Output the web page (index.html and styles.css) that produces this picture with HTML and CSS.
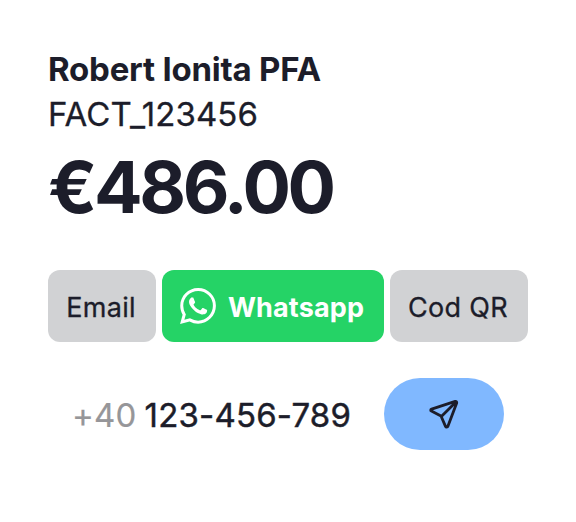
FILE: index.html
```html
<!DOCTYPE html>
<html lang="ro">
<head>
<meta charset="utf-8">
<title>Factura</title>
<link rel="stylesheet" href="styles.css">
</head>
<body>
<main class="invoice">
  <h1 class="name">Robert Ionita PFA</h1>
  <p class="number">FACT_123456</p>
  <p class="amount">€486.00</p>
  <div class="channels">
    <button class="channel email">Email</button>
    <button class="channel whatsapp">
      <svg class="wa-icon" viewBox="0 0 24 24" fill="currentColor"><path d="M17.472 14.382c-.297-.149-1.758-.867-2.03-.967-.273-.099-.471-.148-.67.15-.197.297-.767.966-.94 1.164-.173.199-.347.223-.644.075-.297-.15-1.255-.463-2.39-1.475-.883-.788-1.48-1.761-1.653-2.059-.173-.297-.018-.458.13-.606.134-.133.298-.347.446-.52.149-.174.198-.298.298-.497.099-.198.05-.371-.025-.52-.075-.149-.669-1.612-.916-2.207-.242-.579-.487-.5-.669-.51-.173-.008-.371-.01-.57-.01-.198 0-.52.074-.792.372-.272.297-1.04 1.016-1.04 2.479 0 1.462 1.065 2.875 1.213 3.074.149.198 2.096 3.2 5.077 4.487.709.306 1.262.489 1.694.625.712.227 1.36.195 1.871.118.571-.085 1.758-.719 2.006-1.413.248-.694.248-1.289.173-1.413-.074-.124-.272-.198-.57-.347m-5.421 7.403h-.004a9.87 9.87 0 01-5.031-1.378l-.361-.214-3.741.982.998-3.648-.235-.374a9.86 9.86 0 01-1.51-5.26c.001-5.45 4.436-9.884 9.888-9.884 2.64 0 5.122 1.03 6.988 2.898a9.825 9.825 0 012.893 6.994c-.003 5.45-4.437 9.884-9.885 9.884m8.413-18.297A11.815 11.815 0 0012.05 0C5.495 0 .16 5.335.157 11.892c0 2.096.547 4.142 1.588 5.945L.057 24l6.305-1.654a11.882 11.882 0 005.683 1.448h.005c6.554 0 11.89-5.335 11.893-11.893a11.821 11.821 0 00-3.48-8.413z"/></svg>
      <span>Whatsapp</span>
    </button>
    <button class="channel qr">Cod QR</button>
  </div>
  <div class="recipient">
    <p class="phone"><span class="prefix">+40</span> 123-456-789</p>
    <button class="send" aria-label="Trimite">
      <svg class="send-icon" viewBox="0 0 32 32" fill="none" stroke="currentColor" stroke-width="2.8" stroke-linecap="round" stroke-linejoin="round"><path d="M28.2 3.8 13.6 18.2M27.2 3.4 3.6 11.1C2.5 11.5 2.4 12.6 3.4 13.1L13 18l4.5 10.4c.5 1.1 2 1 2.4-.1L28.7 4.9c.3-1-.5-1.8-1.5-1.5z"/></svg>
    </button>
  </div>
</main>
</body>
</html>
```
FILE: styles.css
```css
* { box-sizing: border-box; margin: 0; }
body { background: #fff; color: #1c1d2a; font-family: Inter, "Liberation Sans", sans-serif; font-variation-settings: "opsz" 17; }
.invoice { width: 576px; height: 522px; padding: 46px 48px; }
.name { font-size: 33px; font-weight: 700; line-height: 46px; letter-spacing: -0.22px; }
.number { font-size: 33px; font-weight: 400; line-height: 45px; letter-spacing: 0.1px; -webkit-text-stroke: 0.3px; }
.amount { font-size: 72px; font-weight: 700; line-height: 100px; letter-spacing: -3.4px; }
.channels { display: flex; gap: 6px; margin-top: 33px; }
.channel { display: flex; align-items: center; justify-content: center; height: 72px; padding: 2px 2px 0 0; border: 0; border-radius: 12px; background: #d1d2d4; color: inherit; font: 400 27px Inter, "Liberation Sans", sans-serif; font-variation-settings: "opsz" 17; letter-spacing: 0.3px; -webkit-text-stroke: 0.3px; }
.email { width: 108px; }
.whatsapp { width: 222px; gap: 12px; background: #25d366; color: #fff; font-weight: 700; letter-spacing: 0.15px; -webkit-text-stroke: 0; }
.qr { width: 138px; }
.wa-icon { width: 36px; height: 36px; margin-top: -2px; }
.recipient { display: flex; align-items: center; justify-content: space-between; margin-top: 36px; padding: 0 24px; }
.phone { padding-top: 2px; font-size: 33px; font-weight: 400; line-height: 46px; letter-spacing: 0.18px; white-space: nowrap; -webkit-text-stroke: 0.45px; }
.prefix { margin-right: -1.4px; color: #969699; -webkit-text-stroke: 0.2px; }
.send { display: flex; align-items: center; justify-content: center; width: 120px; height: 72px; padding: 0; border: 0; border-radius: 36px; background: #80b8ff; color: inherit; }
.send-icon { width: 32px; height: 32px; }
```
